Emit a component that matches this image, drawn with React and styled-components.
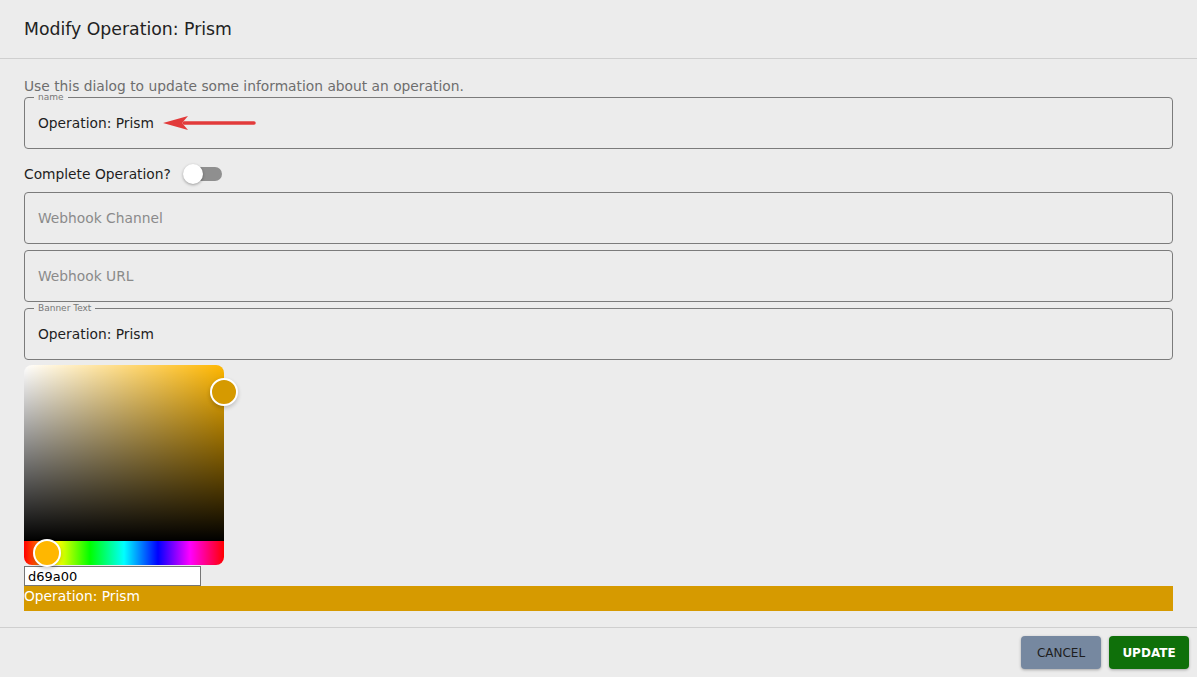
import React from 'react'
import styled, { createGlobalStyle } from 'styled-components'

const Global = createGlobalStyle`
  html, body { margin: 0; padding: 0; background: #ececec; }
  body { font-family: "DejaVu Sans", Verdana, sans-serif; color: #222; }
`

const Dialog = styled.div`
  width: 1197px;
  height: 677px;
  background: #ececec;
  display: flex;
  flex-direction: column;
`

const Header = styled.div`
  height: 59px;
  box-sizing: border-box;
  padding: 0 24px;
  display: flex;
  align-items: center;
  border-bottom: 1px solid #cfcfcf;
  font-size: 17.3px;
  color: #222;
`

const Body = styled.div`
  padding: 17px 24px 0 24px;
  display: flex;
  flex-direction: column;
  height: 569px;
  box-sizing: border-box;
  border-bottom: 1px solid #cfcfcf;
`

const Intro = styled.div`
  font-size: 13.8px;
  color: #6e6e6e;
  line-height: 20px;
  height: 21px;
`

const Field = styled.div`
  margin: 0 0 ${p => (p.$last ? 5 : 6)}px 0;
  padding: 0 13px;
  height: 52px;
  box-sizing: border-box;
  border: 1px solid #7b7b7b;
  border-radius: 4px;
  display: flex;
  align-items: center;
  font-size: 13.8px;
  color: ${p => (p.$empty ? '#8a8a8a' : '#1e1e1e')};
  position: relative;
`

const Legend = styled.span`
  font-size: 9px;
  color: #777;
  padding: 0 4px;
  line-height: 10px;
  position: absolute;
  top: -6px;
  left: 9px;
  background: #ececec;
`

const ToggleRow = styled.div`
  display: flex;
  align-items: center;
  height: 37px;
  font-size: 13.8px;
  color: #1e1e1e;
  gap: 13px;
`

const Track = styled.span`
  position: relative;
  width: 36px;
  height: 14px;
  border-radius: 7px;
  background: #8f8f8f;
  margin-left: 2px;
`

const Thumb = styled.span`
  position: absolute;
  left: -3px;
  top: -3px;
  width: 20px;
  height: 20px;
  border-radius: 50%;
  background: #fff;
  box-shadow: 0 1px 3px rgba(0,0,0,0.35);
`

const Picker = styled.div`
  width: 200px;
  height: 200px;
  position: relative;
  display: flex;
  flex-direction: column;
`

const Saturation = styled.div`
  height: 176px;
  border-radius: 8px 8px 0 0;
  background:
    linear-gradient(to top, #000, rgba(0,0,0,0)),
    linear-gradient(to right, #fff, rgba(255,255,255,0)),
    ${p => p.$hue};
  position: relative;
`

const Hue = styled.div`
  height: 24px;
  border-radius: 0 0 8px 8px;
  background: linear-gradient(to right, #f00 0%, #ff0 17%, #0f0 33%, #0ff 50%, #00f 67%, #f0f 83%, #f00 100%);
  position: relative;
`

const Pointer = styled.span`
  position: absolute;
  width: 28px;
  height: 28px;
  box-sizing: border-box;
  border-radius: 50%;
  border: 2px solid #fff;
  box-shadow: 0 2px 4px rgba(0,0,0,0.2);
  background: ${p => p.$color};
  transform: translate(-50%, -50%);
`

const HexInput = styled.input`
  width: 177px;
  height: 20px;
  box-sizing: border-box;
  border: 1px solid #767676;
  background: #fff;
  font-family: "DejaVu Sans", sans-serif;
  font-size: 13px;
  padding: 0 3px;
  margin: 1px 0 0 0;
  outline: none;
`

const Banner = styled.div`
  background: ${p => p.$color};
  color: #fff;
  font-size: 13.8px;
  height: 25px;
  line-height: 20px;
`

const Footer = styled.div`
  flex: 1;
  display: flex;
  justify-content: flex-end;
  align-items: flex-start;
  padding: 8px 8px 0 0;
  gap: 8px;
`

const Button = styled.button`
  width: 80px;
  height: 33px;
  border: none;
  border-radius: 4px;
  font-family: "DejaVu Sans", sans-serif;
  font-size: 12px;
  font-weight: ${p => (p.$primary ? 700 : 400)};
  background: ${p => (p.$primary ? '#0f700a' : '#7688a0')};
  color: ${p => (p.$primary ? '#fff' : '#1e1e1e')};
  box-shadow: 0 1px 3px rgba(0,0,0,0.3);
`

const Arrow = () => (
  <svg width="94" height="16" viewBox="0 0 94 16" style={{ marginLeft: 8 }}>
    <path d="M92 8 L22 8" stroke="#e23a3a" strokeWidth="3.5" strokeLinecap="round" />
    <path d="M1 8 L26 1 L20 8 L26 15 Z" fill="#e23a3a" />
  </svg>
)

export default function App() {
  const color = '#d69a00'
  const hue = '#ffb700'
  return (
    <Dialog>
      <Global />
      <Header>Modify Operation: Prism</Header>
      <Body>
        <Intro>Use this dialog to update some information about an operation.</Intro>
        <Field>
          <Legend>name</Legend>
          Operation: Prism
          <Arrow />
        </Field>
        <ToggleRow>
          Complete Operation?
          <Track><Thumb /></Track>
        </ToggleRow>
        <Field $empty>Webhook Channel</Field>
        <Field $empty>Webhook URL</Field>
        <Field $last>
          <Legend>Banner Text</Legend>
          Operation: Prism
        </Field>
        <Picker>
          <Saturation $hue={hue}>
            <Pointer $color={color} style={{ left: '100%', top: 27 }} />
          </Saturation>
          <Hue>
            <Pointer $color={hue} style={{ left: 23, top: '50%' }} />
          </Hue>
        </Picker>
        <HexInput defaultValue="d69a00" />
        <Banner $color={color}>Operation: Prism</Banner>
      </Body>
      <Footer>
        <Button>CANCEL</Button>
        <Button $primary>UPDATE</Button>
      </Footer>
    </Dialog>
  )
}
